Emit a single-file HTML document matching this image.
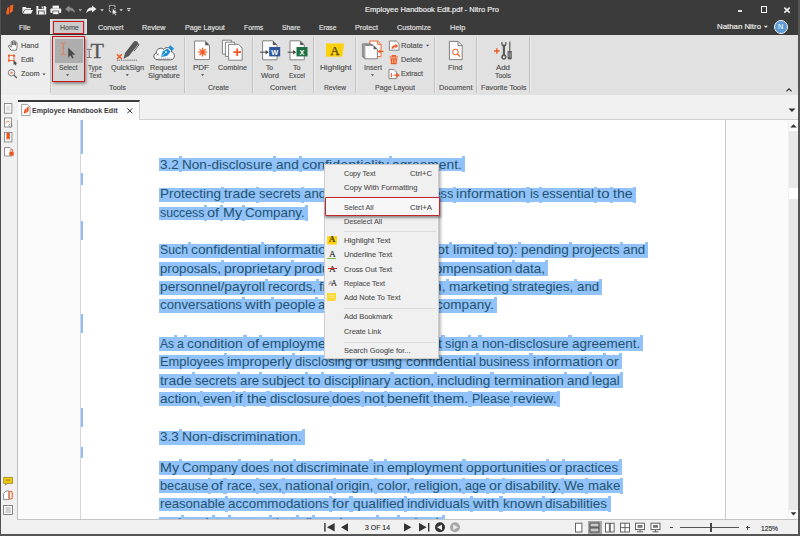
<!DOCTYPE html>
<html lang="en"><head><meta charset="utf-8"><title>Employee Handbook Edit.pdf - Nitro Pro</title>
<style>
html,body{margin:0;padding:0;}
body{width:800px;height:536px;overflow:hidden;position:relative;background:#f0f0f0;font-family:"Liberation Sans", sans-serif;}
#app{position:absolute;left:0;top:0;width:800px;height:536px;overflow:hidden;}
#app div,#app svg,#app span{position:absolute;}
.t{white-space:nowrap;line-height:1;transform-origin:0 50%;}
.u{-webkit-text-stroke:0.16px currentColor;}
.m{-webkit-text-stroke:0.1px currentColor;}
</style></head>
<body><div id="app">
<div style="left:0px;top:95px;width:800px;height:441px;background:#f0f0f0;"></div>
<div style="left:18px;top:120px;width:770px;height:399px;background:#fbfbfb;"></div>
<div style="left:80px;top:120px;width:646px;height:399px;background:#ffffff;border-left:1px solid #d4d4d4;border-right:1px solid #c9c9c9;box-sizing:border-box;"></div>
<div style="left:80.6px;top:120px;width:2.8px;height:34.4px;background:#8ec0f8;"></div>
<div style="left:80.6px;top:173px;width:2.8px;height:12px;background:#8ec0f8;"></div>
<div style="left:80.6px;top:221px;width:2.8px;height:19.3px;background:#8ec0f8;"></div>
<div style="left:80.6px;top:314px;width:2.8px;height:19px;background:#8ec0f8;"></div>
<div style="left:80.6px;top:407.6px;width:2.8px;height:19.7px;background:#8ec0f8;"></div>
<div style="left:80.6px;top:446.5px;width:2.8px;height:11.3px;background:#8ec0f8;"></div>
<div style="left:158.8px;top:157.8px;width:306.6px;height:13.7px;background:#91c2f9;"></div>
<div style="left:178.6px;top:155.9px;width:3.4px;height:16.1px;background:#91c2f9;"></div>
<div style="left:272.5px;top:155.9px;width:3.4px;height:16.1px;background:#91c2f9;"></div>
<div style="left:298.6px;top:155.9px;width:3.4px;height:16.1px;background:#91c2f9;"></div>
<div style="left:388.8px;top:155.9px;width:3.4px;height:16.1px;background:#91c2f9;"></div>
<div style="left:462.0px;top:155.9px;width:3.4px;height:16.1px;background:#91c2f9;"></div>
<div style="left:158.8px;top:188.4px;width:477.0px;height:13.7px;background:#91c2f9;"></div>
<div style="left:220.8px;top:186.5px;width:3.3px;height:16.1px;background:#91c2f9;"></div>
<div style="left:255.7px;top:186.5px;width:3.3px;height:16.1px;background:#91c2f9;"></div>
<div style="left:300.8px;top:186.5px;width:3.3px;height:16.1px;background:#91c2f9;"></div>
<div style="left:326.2px;top:186.5px;width:3.3px;height:16.1px;background:#91c2f9;"></div>
<div style="left:399.5px;top:186.5px;width:3.3px;height:16.1px;background:#91c2f9;"></div>
<div style="left:453.2px;top:186.5px;width:3.3px;height:16.1px;background:#91c2f9;"></div>
<div style="left:526.4px;top:186.5px;width:3.3px;height:16.1px;background:#91c2f9;"></div>
<div style="left:538.7px;top:186.5px;width:3.3px;height:16.1px;background:#91c2f9;"></div>
<div style="left:593.8px;top:186.5px;width:3.3px;height:16.1px;background:#91c2f9;"></div>
<div style="left:609.5px;top:186.5px;width:3.3px;height:16.1px;background:#91c2f9;"></div>
<div style="left:632.5px;top:186.5px;width:3.3px;height:16.1px;background:#91c2f9;"></div>
<div style="left:158.8px;top:206.7px;width:149.5px;height:13.7px;background:#91c2f9;"></div>
<div style="left:204.2px;top:204.8px;width:3.3px;height:16.1px;background:#91c2f9;"></div>
<div style="left:219.6px;top:204.8px;width:3.3px;height:16.1px;background:#91c2f9;"></div>
<div style="left:242.0px;top:204.8px;width:3.3px;height:16.1px;background:#91c2f9;"></div>
<div style="left:305.0px;top:204.8px;width:3.3px;height:16.1px;background:#91c2f9;"></div>
<div style="left:158.8px;top:243.9px;width:489.5px;height:13.7px;background:#91c2f9;"></div>
<div style="left:187.8px;top:242.0px;width:3.3px;height:16.1px;background:#91c2f9;"></div>
<div style="left:261.0px;top:242.0px;width:3.3px;height:16.1px;background:#91c2f9;"></div>
<div style="left:334.2px;top:242.0px;width:3.3px;height:16.1px;background:#91c2f9;"></div>
<div style="left:385.9px;top:242.0px;width:3.3px;height:16.1px;background:#91c2f9;"></div>
<div style="left:413.6px;top:242.0px;width:3.3px;height:16.1px;background:#91c2f9;"></div>
<div style="left:425.9px;top:242.0px;width:3.3px;height:16.1px;background:#91c2f9;"></div>
<div style="left:449.2px;top:242.0px;width:3.3px;height:16.1px;background:#91c2f9;"></div>
<div style="left:493.7px;top:242.0px;width:3.3px;height:16.1px;background:#91c2f9;"></div>
<div style="left:517.7px;top:242.0px;width:3.3px;height:16.1px;background:#91c2f9;"></div>
<div style="left:568.7px;top:242.0px;width:3.3px;height:16.1px;background:#91c2f9;"></div>
<div style="left:619.6px;top:242.0px;width:3.3px;height:16.1px;background:#91c2f9;"></div>
<div style="left:645.0px;top:242.0px;width:3.3px;height:16.1px;background:#91c2f9;"></div>
<div style="left:158.8px;top:262.1px;width:389.5px;height:13.7px;background:#91c2f9;"></div>
<div style="left:220.7px;top:260.2px;width:3.3px;height:16.1px;background:#91c2f9;"></div>
<div style="left:291.0px;top:260.2px;width:3.3px;height:16.1px;background:#91c2f9;"></div>
<div style="left:359.5px;top:260.2px;width:3.3px;height:16.1px;background:#91c2f9;"></div>
<div style="left:424.4px;top:260.2px;width:3.3px;height:16.1px;background:#91c2f9;"></div>
<div style="left:511.7px;top:260.2px;width:3.3px;height:16.1px;background:#91c2f9;"></div>
<div style="left:545.0px;top:260.2px;width:3.3px;height:16.1px;background:#91c2f9;"></div>
<div style="left:158.8px;top:281px;width:443.5px;height:13.7px;background:#91c2f9;"></div>
<div style="left:264.8px;top:279.1px;width:3.3px;height:16.1px;background:#91c2f9;"></div>
<div style="left:316.0px;top:279.1px;width:3.3px;height:16.1px;background:#91c2f9;"></div>
<div style="left:368.9px;top:279.1px;width:3.3px;height:16.1px;background:#91c2f9;"></div>
<div style="left:445.8px;top:279.1px;width:3.3px;height:16.1px;background:#91c2f9;"></div>
<div style="left:509.1px;top:279.1px;width:3.3px;height:16.1px;background:#91c2f9;"></div>
<div style="left:573.6px;top:279.1px;width:3.3px;height:16.1px;background:#91c2f9;"></div>
<div style="left:599.0px;top:279.1px;width:3.3px;height:16.1px;background:#91c2f9;"></div>
<div style="left:158.8px;top:299.2px;width:338.5px;height:13.7px;background:#91c2f9;"></div>
<div style="left:241.8px;top:297.3px;width:3.3px;height:16.1px;background:#91c2f9;"></div>
<div style="left:271.2px;top:297.3px;width:3.3px;height:16.1px;background:#91c2f9;"></div>
<div style="left:315.2px;top:297.3px;width:3.3px;height:16.1px;background:#91c2f9;"></div>
<div style="left:380.5px;top:297.3px;width:3.3px;height:16.1px;background:#91c2f9;"></div>
<div style="left:410.0px;top:297.3px;width:3.3px;height:16.1px;background:#91c2f9;"></div>
<div style="left:432.9px;top:297.3px;width:3.3px;height:16.1px;background:#91c2f9;"></div>
<div style="left:494.0px;top:297.3px;width:3.3px;height:16.1px;background:#91c2f9;"></div>
<div style="left:158.8px;top:337.2px;width:484.5px;height:13.7px;background:#91c2f9;"></div>
<div style="left:173.9px;top:335.3px;width:3.3px;height:16.1px;background:#91c2f9;"></div>
<div style="left:184.1px;top:335.3px;width:3.3px;height:16.1px;background:#91c2f9;"></div>
<div style="left:243.3px;top:335.3px;width:3.3px;height:16.1px;background:#91c2f9;"></div>
<div style="left:258.7px;top:335.3px;width:3.3px;height:16.1px;background:#91c2f9;"></div>
<div style="left:340.9px;top:335.3px;width:3.3px;height:16.1px;background:#91c2f9;"></div>
<div style="left:408.3px;top:335.3px;width:3.3px;height:16.1px;background:#91c2f9;"></div>
<div style="left:441.4px;top:335.3px;width:3.3px;height:16.1px;background:#91c2f9;"></div>
<div style="left:468.2px;top:335.3px;width:3.3px;height:16.1px;background:#91c2f9;"></div>
<div style="left:478.4px;top:335.3px;width:3.3px;height:16.1px;background:#91c2f9;"></div>
<div style="left:568.4px;top:335.3px;width:3.3px;height:16.1px;background:#91c2f9;"></div>
<div style="left:640.0px;top:335.3px;width:3.3px;height:16.1px;background:#91c2f9;"></div>
<div style="left:158.8px;top:355.1px;width:463.0px;height:13.7px;background:#91c2f9;"></div>
<div style="left:223.6px;top:353.2px;width:3.3px;height:16.1px;background:#91c2f9;"></div>
<div style="left:291.8px;top:353.2px;width:3.3px;height:16.1px;background:#91c2f9;"></div>
<div style="left:352.2px;top:353.2px;width:3.3px;height:16.1px;background:#91c2f9;"></div>
<div style="left:368.2px;top:353.2px;width:3.3px;height:16.1px;background:#91c2f9;"></div>
<div style="left:402.5px;top:353.2px;width:3.3px;height:16.1px;background:#91c2f9;"></div>
<div style="left:475.7px;top:353.2px;width:3.3px;height:16.1px;background:#91c2f9;"></div>
<div style="left:529.3px;top:353.2px;width:3.3px;height:16.1px;background:#91c2f9;"></div>
<div style="left:602.5px;top:353.2px;width:3.3px;height:16.1px;background:#91c2f9;"></div>
<div style="left:618.5px;top:353.2px;width:3.3px;height:16.1px;background:#91c2f9;"></div>
<div style="left:158.8px;top:374.2px;width:464.5px;height:13.7px;background:#91c2f9;"></div>
<div style="left:191.5px;top:372.3px;width:3.3px;height:16.1px;background:#91c2f9;"></div>
<div style="left:236.5px;top:372.3px;width:3.3px;height:16.1px;background:#91c2f9;"></div>
<div style="left:259.0px;top:372.3px;width:3.3px;height:16.1px;background:#91c2f9;"></div>
<div style="left:304.8px;top:372.3px;width:3.3px;height:16.1px;background:#91c2f9;"></div>
<div style="left:320.6px;top:372.3px;width:3.3px;height:16.1px;background:#91c2f9;"></div>
<div style="left:390.4px;top:372.3px;width:3.3px;height:16.1px;background:#91c2f9;"></div>
<div style="left:433.7px;top:372.3px;width:3.3px;height:16.1px;background:#91c2f9;"></div>
<div style="left:490.4px;top:372.3px;width:3.3px;height:16.1px;background:#91c2f9;"></div>
<div style="left:563.7px;top:372.3px;width:3.3px;height:16.1px;background:#91c2f9;"></div>
<div style="left:589.1px;top:372.3px;width:3.3px;height:16.1px;background:#91c2f9;"></div>
<div style="left:620.0px;top:372.3px;width:3.3px;height:16.1px;background:#91c2f9;"></div>
<div style="left:158.8px;top:392.4px;width:401.0px;height:13.7px;background:#91c2f9;"></div>
<div style="left:200.1px;top:390.5px;width:3.3px;height:16.1px;background:#91c2f9;"></div>
<div style="left:232.1px;top:390.5px;width:3.3px;height:16.1px;background:#91c2f9;"></div>
<div style="left:243.2px;top:390.5px;width:3.3px;height:16.1px;background:#91c2f9;"></div>
<div style="left:266.3px;top:390.5px;width:3.3px;height:16.1px;background:#91c2f9;"></div>
<div style="left:329.1px;top:390.5px;width:3.3px;height:16.1px;background:#91c2f9;"></div>
<div style="left:360.7px;top:390.5px;width:3.3px;height:16.1px;background:#91c2f9;"></div>
<div style="left:384.2px;top:390.5px;width:3.3px;height:16.1px;background:#91c2f9;"></div>
<div style="left:429.9px;top:390.5px;width:3.3px;height:16.1px;background:#91c2f9;"></div>
<div style="left:468.3px;top:390.5px;width:3.3px;height:16.1px;background:#91c2f9;"></div>
<div style="left:509.6px;top:390.5px;width:3.3px;height:16.1px;background:#91c2f9;"></div>
<div style="left:556.5px;top:390.5px;width:3.3px;height:16.1px;background:#91c2f9;"></div>
<div style="left:158.8px;top:430.9px;width:146.1px;height:13.7px;background:#91c2f9;"></div>
<div style="left:178.6px;top:429.0px;width:3.4px;height:16.1px;background:#91c2f9;"></div>
<div style="left:301.5px;top:429.0px;width:3.4px;height:16.1px;background:#91c2f9;"></div>
<div style="left:158.8px;top:461.2px;width:463.0px;height:13.7px;background:#91c2f9;"></div>
<div style="left:178.8px;top:459.3px;width:3.3px;height:16.1px;background:#91c2f9;"></div>
<div style="left:238.0px;top:459.3px;width:3.3px;height:16.1px;background:#91c2f9;"></div>
<div style="left:269.6px;top:459.3px;width:3.3px;height:16.1px;background:#91c2f9;"></div>
<div style="left:293.1px;top:459.3px;width:3.3px;height:16.1px;background:#91c2f9;"></div>
<div style="left:369.3px;top:459.3px;width:3.3px;height:16.1px;background:#91c2f9;"></div>
<div style="left:383.6px;top:459.3px;width:3.3px;height:16.1px;background:#91c2f9;"></div>
<div style="left:462.4px;top:459.3px;width:3.3px;height:16.1px;background:#91c2f9;"></div>
<div style="left:546.0px;top:459.3px;width:3.3px;height:16.1px;background:#91c2f9;"></div>
<div style="left:562.1px;top:459.3px;width:3.3px;height:16.1px;background:#91c2f9;"></div>
<div style="left:618.5px;top:459.3px;width:3.3px;height:16.1px;background:#91c2f9;"></div>
<div style="left:158.8px;top:479.4px;width:464.5px;height:13.7px;background:#91c2f9;"></div>
<div style="left:208.1px;top:477.5px;width:3.3px;height:16.1px;background:#91c2f9;"></div>
<div style="left:223.4px;top:477.5px;width:3.3px;height:16.1px;background:#91c2f9;"></div>
<div style="left:255.6px;top:477.5px;width:3.3px;height:16.1px;background:#91c2f9;"></div>
<div style="left:281.6px;top:477.5px;width:3.3px;height:16.1px;background:#91c2f9;"></div>
<div style="left:333.1px;top:477.5px;width:3.3px;height:16.1px;background:#91c2f9;"></div>
<div style="left:373.7px;top:477.5px;width:3.3px;height:16.1px;background:#91c2f9;"></div>
<div style="left:410.4px;top:477.5px;width:3.3px;height:16.1px;background:#91c2f9;"></div>
<div style="left:461.5px;top:477.5px;width:3.3px;height:16.1px;background:#91c2f9;"></div>
<div style="left:485.7px;top:477.5px;width:3.3px;height:16.1px;background:#91c2f9;"></div>
<div style="left:501.7px;top:477.5px;width:3.3px;height:16.1px;background:#91c2f9;"></div>
<div style="left:561.1px;top:477.5px;width:3.3px;height:16.1px;background:#91c2f9;"></div>
<div style="left:584.5px;top:477.5px;width:3.3px;height:16.1px;background:#91c2f9;"></div>
<div style="left:620.0px;top:477.5px;width:3.3px;height:16.1px;background:#91c2f9;"></div>
<div style="left:158.8px;top:497.8px;width:452.0px;height:13.7px;background:#91c2f9;"></div>
<div style="left:224.8px;top:495.9px;width:3.3px;height:16.1px;background:#91c2f9;"></div>
<div style="left:329.1px;top:495.9px;width:3.3px;height:16.1px;background:#91c2f9;"></div>
<div style="left:349.4px;top:495.9px;width:3.3px;height:16.1px;background:#91c2f9;"></div>
<div style="left:403.9px;top:495.9px;width:3.3px;height:16.1px;background:#91c2f9;"></div>
<div style="left:469.9px;top:495.9px;width:3.3px;height:16.1px;background:#91c2f9;"></div>
<div style="left:499.3px;top:495.9px;width:3.3px;height:16.1px;background:#91c2f9;"></div>
<div style="left:542.2px;top:495.9px;width:3.3px;height:16.1px;background:#91c2f9;"></div>
<div style="left:607.5px;top:495.9px;width:3.3px;height:16.1px;background:#91c2f9;"></div>
<div style="left:158.8px;top:516.7px;width:285.8px;height:13.7px;background:#91c2f9;"></div>
<div style="left:181.0px;top:514.8px;width:3.1px;height:16.1px;background:#91c2f9;"></div>
<div style="left:212.4px;top:514.8px;width:3.1px;height:16.1px;background:#91c2f9;"></div>
<div style="left:227.5px;top:514.8px;width:3.1px;height:16.1px;background:#91c2f9;"></div>
<div style="left:269.2px;top:514.8px;width:3.1px;height:16.1px;background:#91c2f9;"></div>
<div style="left:295.5px;top:514.8px;width:3.1px;height:16.1px;background:#91c2f9;"></div>
<div style="left:311.6px;top:514.8px;width:3.1px;height:16.1px;background:#91c2f9;"></div>
<div style="left:375.9px;top:514.8px;width:3.1px;height:16.1px;background:#91c2f9;"></div>
<div style="left:397.4px;top:514.8px;width:3.1px;height:16.1px;background:#91c2f9;"></div>
<div style="left:441.5px;top:514.8px;width:3.1px;height:16.1px;background:#91c2f9;"></div>
<span class="t" style="left:159.8px;top:158.03px;font-size:13.2px;color:#235370;transform:scaleX(1.0254);">3.2</span>
<span class="t" style="left:181.97px;top:158.03px;font-size:13.2px;color:#235370;transform:scaleX(1.0288);">Non-disclosure</span>
<span class="t" style="left:275.83px;top:158.03px;font-size:13.2px;color:#235370;transform:scaleX(1.0320);">and</span>
<span class="t" style="left:301.91px;top:158.03px;font-size:13.2px;color:#235370;transform:scaleX(1.0873);">confidentiality</span>
<span class="t" style="left:392.15px;top:158.03px;font-size:13.2px;color:#235370;transform:scaleX(1.0469);">agreement.</span>
<span class="t" style="left:159.8px;top:187.43px;font-size:13.2px;color:#235370;transform:scaleX(1.0268);">Protecting</span>
<span class="t" style="left:224.05px;top:187.43px;font-size:13.2px;color:#235370;transform:scaleX(1.0535);">trade</span>
<span class="t" style="left:259.0px;top:187.43px;font-size:13.2px;color:#235370;transform:scaleX(0.9827);">secrets</span>
<span class="t" style="left:304.06px;top:187.43px;font-size:13.2px;color:#235370;transform:scaleX(1.0066);">and</span>
<span class="t" style="left:329.5px;top:187.43px;font-size:13.2px;color:#235370;transform:scaleX(1.0492);">confidential</span>
<span class="t" style="left:402.78px;top:187.43px;font-size:13.2px;color:#235370;transform:scaleX(0.9675);">business</span>
<span class="t" style="left:456.43px;top:187.43px;font-size:13.2px;color:#235370;transform:scaleX(1.0728);">information</span>
<span class="t" style="left:529.7px;top:187.43px;font-size:13.2px;color:#235370;transform:scaleX(0.9432);">is</span>
<span class="t" style="left:541.97px;top:187.43px;font-size:13.2px;color:#235370;transform:scaleX(0.9952);">essential</span>
<span class="t" style="left:597.05px;top:187.43px;font-size:13.2px;color:#235370;transform:scaleX(1.1364);">to</span>
<span class="t" style="left:612.82px;top:187.43px;font-size:13.2px;color:#235370;transform:scaleX(1.0728);">the</span>
<span class="t" style="left:159.8px;top:205.83px;font-size:13.2px;color:#235370;transform:scaleX(0.9313);">success</span>
<span class="t" style="left:207.47px;top:205.83px;font-size:13.2px;color:#235370;transform:scaleX(1.1036);">of</span>
<span class="t" style="left:222.91px;top:205.83px;font-size:13.2px;color:#235370;transform:scaleX(1.0839);">My</span>
<span class="t" style="left:245.28px;top:205.83px;font-size:13.2px;color:#235370;transform:scaleX(1.0101);">Company.</span>
<span class="t" style="left:159.8px;top:243.13px;font-size:13.2px;color:#235370;transform:scaleX(0.9307);">Such</span>
<span class="t" style="left:191.05px;top:243.13px;font-size:13.2px;color:#235370;transform:scaleX(1.0483);">confidential</span>
<span class="t" style="left:264.26px;top:243.13px;font-size:13.2px;color:#235370;transform:scaleX(1.0717);">information</span>
<span class="t" style="left:337.46px;top:243.13px;font-size:13.2px;color:#235370;transform:scaleX(1.0010);">includes</span>
<span class="t" style="left:389.17px;top:243.13px;font-size:13.2px;color:#235370;transform:scaleX(1.0755);">(but</span>
<span class="t" style="left:416.89px;top:243.13px;font-size:13.2px;color:#235370;transform:scaleX(0.9432);">is</span>
<span class="t" style="left:429.15px;top:243.13px;font-size:13.2px;color:#235370;transform:scaleX(1.0947);">not</span>
<span class="t" style="left:452.51px;top:243.13px;font-size:13.2px;color:#235370;transform:scaleX(1.0806);">limited</span>
<span class="t" style="left:496.96px;top:243.13px;font-size:13.2px;color:#235370;transform:scaleX(1.0880);">to):</span>
<span class="t" style="left:520.98px;top:243.13px;font-size:13.2px;color:#235370;transform:scaleX(1.0173);">pending</span>
<span class="t" style="left:572.01px;top:243.13px;font-size:13.2px;color:#235370;transform:scaleX(1.0299);">projects</span>
<span class="t" style="left:622.86px;top:243.13px;font-size:13.2px;color:#235370;transform:scaleX(1.0056);">and</span>
<span class="t" style="left:159.8px;top:261.53px;font-size:13.2px;color:#235370;transform:scaleX(1.0007);">proposals,</span>
<span class="t" style="left:223.98px;top:261.53px;font-size:13.2px;color:#235370;transform:scaleX(1.0635);">proprietary</span>
<span class="t" style="left:294.31px;top:261.53px;font-size:13.2px;color:#235370;transform:scaleX(1.0590);">production</span>
<span class="t" style="left:362.82px;top:261.53px;font-size:13.2px;color:#235370;transform:scaleX(0.9658);">processes,</span>
<span class="t" style="left:427.7px;top:261.53px;font-size:13.2px;color:#235370;transform:scaleX(1.0229);">compensation</span>
<span class="t" style="left:514.97px;top:261.53px;font-size:13.2px;color:#235370;transform:scaleX(1.0234);">data,</span>
<span class="t" style="left:159.8px;top:279.93px;font-size:13.2px;color:#235370;transform:scaleX(1.0453);">personnel/payroll</span>
<span class="t" style="left:268.06px;top:279.93px;font-size:13.2px;color:#235370;transform:scaleX(1.0071);">records,</span>
<span class="t" style="left:319.31px;top:279.93px;font-size:13.2px;color:#235370;transform:scaleX(1.0256);">financial</span>
<span class="t" style="left:372.22px;top:279.93px;font-size:13.2px;color:#235370;transform:scaleX(1.0683);">information,</span>
<span class="t" style="left:449.1px;top:279.93px;font-size:13.2px;color:#235370;transform:scaleX(1.0356);">marketing</span>
<span class="t" style="left:512.35px;top:279.93px;font-size:13.2px;color:#235370;transform:scaleX(1.0060);">strategies,</span>
<span class="t" style="left:576.84px;top:279.93px;font-size:13.2px;color:#235370;transform:scaleX(1.0066);">and</span>
<span class="t" style="left:159.8px;top:298.33px;font-size:13.2px;color:#235370;transform:scaleX(1.0074);">conversations</span>
<span class="t" style="left:245.06px;top:298.33px;font-size:13.2px;color:#235370;transform:scaleX(1.1163);">with</span>
<span class="t" style="left:274.52px;top:298.33px;font-size:13.2px;color:#235370;transform:scaleX(1.0263);">people</span>
<span class="t" style="left:318.45px;top:298.33px;font-size:13.2px;color:#235370;transform:scaleX(0.9842);">associated</span>
<span class="t" style="left:383.78px;top:298.33px;font-size:13.2px;color:#235370;transform:scaleX(1.1163);">with</span>
<span class="t" style="left:413.24px;top:298.33px;font-size:13.2px;color:#235370;transform:scaleX(1.0734);">the</span>
<span class="t" style="left:436.21px;top:298.33px;font-size:13.2px;color:#235370;transform:scaleX(1.0282);">company.</span>
<span class="t" style="left:159.8px;top:337.03px;font-size:13.2px;color:#235370;transform:scaleX(0.9148);">As</span>
<span class="t" style="left:177.17px;top:337.03px;font-size:13.2px;color:#235370;transform:scaleX(0.9464);">a</span>
<span class="t" style="left:187.41px;top:337.03px;font-size:13.2px;color:#235370;transform:scaleX(1.0582);">condition</span>
<span class="t" style="left:246.57px;top:337.03px;font-size:13.2px;color:#235370;transform:scaleX(1.0991);">of</span>
<span class="t" style="left:261.94px;top:337.03px;font-size:13.2px;color:#235370;transform:scaleX(1.0460);">employment,</span>
<span class="t" style="left:344.19px;top:337.03px;font-size:13.2px;color:#235370;transform:scaleX(1.0058);">employees</span>
<span class="t" style="left:411.63px;top:337.03px;font-size:13.2px;color:#235370;transform:scaleX(1.0417);">must</span>
<span class="t" style="left:444.68px;top:337.03px;font-size:13.2px;color:#235370;transform:scaleX(0.9701);">sign</span>
<span class="t" style="left:471.45px;top:337.03px;font-size:13.2px;color:#235370;transform:scaleX(0.9464);">a</span>
<span class="t" style="left:481.68px;top:337.03px;font-size:13.2px;color:#235370;transform:scaleX(1.0114);">non-disclosure</span>
<span class="t" style="left:571.71px;top:337.03px;font-size:13.2px;color:#235370;transform:scaleX(1.0236);">agreement.</span>
<span class="t" style="left:159.8px;top:355.43px;font-size:13.2px;color:#235370;transform:scaleX(0.9784);">Employees</span>
<span class="t" style="left:226.91px;top:355.43px;font-size:13.2px;color:#235370;transform:scaleX(1.0545);">improperly</span>
<span class="t" style="left:295.11px;top:355.43px;font-size:13.2px;color:#235370;transform:scaleX(0.9856);">disclosing</span>
<span class="t" style="left:355.47px;top:355.43px;font-size:13.2px;color:#235370;transform:scaleX(1.0814);">or</span>
<span class="t" style="left:371.43px;top:355.43px;font-size:13.2px;color:#235370;transform:scaleX(0.9838);">using</span>
<span class="t" style="left:405.72px;top:355.43px;font-size:13.2px;color:#235370;transform:scaleX(1.0487);">confidential</span>
<span class="t" style="left:478.96px;top:355.43px;font-size:13.2px;color:#235370;transform:scaleX(0.9671);">business</span>
<span class="t" style="left:532.58px;top:355.43px;font-size:13.2px;color:#235370;transform:scaleX(1.0722);">information</span>
<span class="t" style="left:605.81px;top:355.43px;font-size:13.2px;color:#235370;transform:scaleX(1.0814);">or</span>
<span class="t" style="left:159.8px;top:373.83px;font-size:13.2px;color:#235370;transform:scaleX(1.0535);">trade</span>
<span class="t" style="left:194.74px;top:373.83px;font-size:13.2px;color:#235370;transform:scaleX(0.9829);">secrets</span>
<span class="t" style="left:239.8px;top:373.83px;font-size:13.2px;color:#235370;transform:scaleX(1.0072);">are</span>
<span class="t" style="left:262.28px;top:373.83px;font-size:13.2px;color:#235370;transform:scaleX(1.0180);">subject</span>
<span class="t" style="left:308.1px;top:373.83px;font-size:13.2px;color:#235370;transform:scaleX(1.1364);">to</span>
<span class="t" style="left:323.87px;top:373.83px;font-size:13.2px;color:#235370;transform:scaleX(1.0191);">disciplinary</span>
<span class="t" style="left:393.63px;top:373.83px;font-size:13.2px;color:#235370;transform:scaleX(1.0322);">action,</span>
<span class="t" style="left:437.02px;top:373.83px;font-size:13.2px;color:#235370;transform:scaleX(1.0251);">including</span>
<span class="t" style="left:493.67px;top:373.83px;font-size:13.2px;color:#235370;transform:scaleX(1.0726);">termination</span>
<span class="t" style="left:566.94px;top:373.83px;font-size:13.2px;color:#235370;transform:scaleX(1.0066);">and</span>
<span class="t" style="left:592.38px;top:373.83px;font-size:13.2px;color:#235370;transform:scaleX(0.9909);">legal</span>
<span class="t" style="left:159.8px;top:392.23px;font-size:13.2px;color:#235370;transform:scaleX(1.0376);">action,</span>
<span class="t" style="left:203.41px;top:392.23px;font-size:13.2px;color:#235370;transform:scaleX(1.0039);">even</span>
<span class="t" style="left:235.43px;top:392.23px;font-size:13.2px;color:#235370;transform:scaleX(1.1799);">if</span>
<span class="t" style="left:246.5px;top:392.23px;font-size:13.2px;color:#235370;transform:scaleX(1.0783);">the</span>
<span class="t" style="left:269.57px;top:392.23px;font-size:13.2px;color:#235370;transform:scaleX(1.0028);">disclosure</span>
<span class="t" style="left:332.4px;top:392.23px;font-size:13.2px;color:#235370;transform:scaleX(0.9885);">does</span>
<span class="t" style="left:363.97px;top:392.23px;font-size:13.2px;color:#235370;transform:scaleX(1.1017);">not</span>
<span class="t" style="left:387.47px;top:392.23px;font-size:13.2px;color:#235370;transform:scaleX(1.0720);">benefit</span>
<span class="t" style="left:433.22px;top:392.23px;font-size:13.2px;color:#235370;transform:scaleX(1.0638);">them.</span>
<span class="t" style="left:471.6px;top:392.23px;font-size:13.2px;color:#235370;transform:scaleX(0.9430);">Please</span>
<span class="t" style="left:512.92px;top:392.23px;font-size:13.2px;color:#235370;transform:scaleX(1.0617);">review.</span>
<span class="t" style="left:159.8px;top:429.83px;font-size:13.2px;color:#235370;transform:scaleX(1.0243);">3.3</span>
<span class="t" style="left:181.95px;top:429.83px;font-size:13.2px;color:#235370;transform:scaleX(1.0591);">Non-discrimination.</span>
<span class="t" style="left:159.8px;top:460.73px;font-size:13.2px;color:#235370;transform:scaleX(1.0816);">My</span>
<span class="t" style="left:182.12px;top:460.73px;font-size:13.2px;color:#235370;transform:scaleX(0.9904);">Company</span>
<span class="t" style="left:241.32px;top:460.73px;font-size:13.2px;color:#235370;transform:scaleX(0.9878);">does</span>
<span class="t" style="left:272.87px;top:460.73px;font-size:13.2px;color:#235370;transform:scaleX(1.1006);">not</span>
<span class="t" style="left:296.35px;top:460.73px;font-size:13.2px;color:#235370;transform:scaleX(1.0368);">discriminate</span>
<span class="t" style="left:372.59px;top:460.73px;font-size:13.2px;color:#235370;transform:scaleX(1.0696);">in</span>
<span class="t" style="left:386.86px;top:460.73px;font-size:13.2px;color:#235370;transform:scaleX(1.0509);">employment</span>
<span class="t" style="left:465.65px;top:460.73px;font-size:13.2px;color:#235370;transform:scaleX(1.0643);">opportunities</span>
<span class="t" style="left:549.31px;top:460.73px;font-size:13.2px;color:#235370;transform:scaleX(1.0866);">or</span>
<span class="t" style="left:565.35px;top:460.73px;font-size:13.2px;color:#235370;transform:scaleX(1.0070);">practices</span>
<span class="t" style="left:159.8px;top:479.03px;font-size:13.2px;color:#235370;transform:scaleX(0.9693);">because</span>
<span class="t" style="left:211.4px;top:479.03px;font-size:13.2px;color:#235370;transform:scaleX(1.0955);">of</span>
<span class="t" style="left:226.72px;top:479.03px;font-size:13.2px;color:#235370;transform:scaleX(0.9857);">race,</span>
<span class="t" style="left:258.9px;top:479.03px;font-size:13.2px;color:#235370;transform:scaleX(0.9406);">sex,</span>
<span class="t" style="left:284.92px;top:479.03px;font-size:13.2px;color:#235370;transform:scaleX(1.0432);">national</span>
<span class="t" style="left:336.39px;top:479.03px;font-size:13.2px;color:#235370;transform:scaleX(1.0398);">origin,</span>
<span class="t" style="left:377.01px;top:479.03px;font-size:13.2px;color:#235370;transform:scaleX(1.0580);">color,</span>
<span class="t" style="left:413.65px;top:479.03px;font-size:13.2px;color:#235370;transform:scaleX(1.0364);">religion,</span>
<span class="t" style="left:464.79px;top:479.03px;font-size:13.2px;color:#235370;transform:scaleX(0.9516);">age</span>
<span class="t" style="left:489.01px;top:479.03px;font-size:13.2px;color:#235370;transform:scaleX(1.0806);">or</span>
<span class="t" style="left:504.96px;top:479.03px;font-size:13.2px;color:#235370;transform:scaleX(1.0540);">disability.</span>
<span class="t" style="left:564.37px;top:479.03px;font-size:13.2px;color:#235370;transform:scaleX(1.0273);">We</span>
<span class="t" style="left:587.72px;top:479.03px;font-size:13.2px;color:#235370;transform:scaleX(1.0009);">make</span>
<span class="t" style="left:159.8px;top:497.23px;font-size:13.2px;color:#235370;transform:scaleX(0.9964);">reasonable</span>
<span class="t" style="left:228.09px;top:497.23px;font-size:13.2px;color:#235370;transform:scaleX(1.0131);">accommodations</span>
<span class="t" style="left:332.35px;top:497.23px;font-size:13.2px;color:#235370;transform:scaleX(1.1091);">for</span>
<span class="t" style="left:352.68px;top:497.23px;font-size:13.2px;color:#235370;transform:scaleX(1.0431);">qualified</span>
<span class="t" style="left:407.19px;top:497.23px;font-size:13.2px;color:#235370;transform:scaleX(1.0183);">individuals</span>
<span class="t" style="left:473.18px;top:497.23px;font-size:13.2px;color:#235370;transform:scaleX(1.1120);">with</span>
<span class="t" style="left:502.52px;top:497.23px;font-size:13.2px;color:#235370;transform:scaleX(1.0413);">known</span>
<span class="t" style="left:545.49px;top:497.23px;font-size:13.2px;color:#235370;transform:scaleX(1.0192);">disabilities</span>
<span class="t" style="left:159.8px;top:515.63px;font-size:13.2px;color:#235370;transform:scaleX(0.9620);">and</span>
<span class="t" style="left:184.11px;top:515.63px;font-size:13.2px;color:#235370;transform:scaleX(1.0171);">work</span>
<span class="t" style="left:215.56px;top:515.63px;font-size:13.2px;color:#235370;transform:scaleX(1.0845);">to</span>
<span class="t" style="left:230.62px;top:515.63px;font-size:13.2px;color:#235370;transform:scaleX(0.9564);">ensure</span>
<span class="t" style="left:272.32px;top:515.63px;font-size:13.2px;color:#235370;transform:scaleX(1.0536);">that</span>
<span class="t" style="left:298.63px;top:515.63px;font-size:13.2px;color:#235370;transform:scaleX(0.9831);">all</span>
<span class="t" style="left:314.74px;top:515.63px;font-size:13.2px;color:#235370;transform:scaleX(0.9589);">employees</span>
<span class="t" style="left:379.03px;top:515.63px;font-size:13.2px;color:#235370;transform:scaleX(0.9626);">are</span>
<span class="t" style="left:400.51px;top:515.63px;font-size:13.2px;color:#235370;transform:scaleX(0.9638);">valued.</span>
<div style="left:788.7px;top:120px;width:9.3px;height:399px;background:#e8e8e8;"></div>
<div style="left:788.7px;top:120px;width:9.3px;height:11px;background:#fdfdfd;"></div>
<div style="left:788.7px;top:509.5px;width:9.3px;height:10px;background:#fdfdfd;"></div>
<div style="left:788.7px;top:188px;width:9.3px;height:11px;background:#ffffff;"></div>
<svg style="left:789px;top:122px" width="9" height="8" viewBox="0 0 9 8"><path d="M1.2 5.6 L4.5 2.2 L7.8 5.6Z" fill="#333"/></svg>
<svg style="left:789.3px;top:510.2px" width="9" height="8" viewBox="0 0 9 8"><path d="M1.6 2.2 L4.5 5.4 L7.4 2.2Z" fill="#333"/></svg>
<div style="left:0px;top:519px;width:800px;height:17px;background:#f0f0f0;"></div>
<div style="left:17px;top:519px;width:783px;height:1px;background:#c4c4c4;"></div>
<div style="left:16.9px;top:101px;width:1px;height:418px;background:#bdbdbd;"></div>
<svg style="left:322px;top:521px" width="140" height="13" viewBox="0 0 140 13"><rect x="2.2" y="2" width="1.4" height="8.6" fill="#333"/><path d="M12.6 2 L12.6 10.6 L5 6.3Z" fill="#333"/><path d="M26 2.2 L26 10.4 L19 6.3Z" fill="#333"/><path d="M82 2.2 L82 10.4 L89.4 6.3Z" fill="#333"/><path d="M97 2 L97 10.6 L104.6 6.3Z" fill="#333"/><rect x="106" y="2" width="1.4" height="8.6" fill="#333"/><circle cx="118" cy="6.3" r="5" fill="#333"/><path d="M120 3.4 L120 9.2 L115 6.3Z" fill="#f0f0f0"/><circle cx="133" cy="6.3" r="5" fill="#a8a8a8"/><path d="M131.2 3.6 L131.2 9 L136 6.3Z" fill="#ececec"/></svg>
<div style="left:587.5px;top:521px;width:14px;height:13px;background:#a6a6a6;"></div>
<svg style="left:573px;top:521px" width="92" height="13" viewBox="0 0 92 13" fill="none" stroke="#555" stroke-width="0.9"><rect x="2.5" y="2.2" width="6.4" height="8.8" fill="#fff"/><rect x="17" y="2" width="9" height="4" fill="#c8c8c8" stroke="#444"/><rect x="17" y="7" width="9" height="4" fill="#c8c8c8" stroke="#444"/><rect x="32.5" y="2.2" width="3.8" height="8.8" fill="#fff"/><rect x="37.3" y="2.2" width="3.8" height="8.8" fill="#fff"/><rect x="47.5" y="2.2" width="9" height="8.8" fill="#fff"/><path d="M52 2.2V11M47.5 6.6H56.5"/><rect x="62.5" y="2.2" width="9" height="6.4" fill="#fff"/><rect x="64.5" y="4" width="5" height="2.8" fill="#777" stroke="none"/><path d="M64 10.8H70M67 8.6V10.8"/><rect x="78" y="2.2" width="9" height="6.4" fill="#fff"/><rect x="80" y="4" width="5" height="2.8" fill="#777" stroke="none"/><path d="M79.5 10.8H85.5M82.5 8.6V10.8"/></svg>
<div style="left:669.5px;top:527px;width:3px;height:1px;background:#444;"></div>
<div style="left:679.5px;top:527px;width:59px;height:1px;background:#555;"></div>
<div style="left:709.5px;top:523px;width:2.2px;height:9px;background:#444;"></div>
<div style="left:745.5px;top:527px;width:4px;height:1px;background:#444;"></div>
<div style="left:747px;top:525.5px;width:1px;height:4px;background:#444;"></div>
<span class="t u" style="left:364.5px;top:524.34px;font-size:7.4px;color:#333;transform:scaleX(0.9362);">3 OF 14</span>
<span class="t u" style="left:760.8px;top:524.57px;font-size:7.6px;color:#333;transform:scaleX(0.8746);">125%</span>
<div style="left:0px;top:95px;width:800px;height:24.5px;background:#f1f1f1;"></div>
<div style="left:18px;top:119px;width:782px;height:1px;background:#cfcfcf;"></div>
<div style="left:18px;top:100px;width:122px;height:19.6px;background:#fbfbfb;border-top:2px solid #3b3b3b;border-right:1px solid #d0d0d0;box-sizing:border-box;"></div>
<svg style="left:0;top:95px" width="18" height="430" viewBox="0 0 18 430"><rect x="4.5" y="8.6" width="7.4" height="9.6" fill="#fafafa" stroke="#777" stroke-width="0.8"/><rect x="6.2" y="10.6" width="4" height="5.6" fill="#e2e2e2"/><rect x="4.5" y="23" width="7" height="9" fill="#fff" stroke="#777" stroke-width="0.8"/><path d="M5.5 28 q2 -3 4 -1" stroke="#e8622a" fill="none" stroke-width="0.9"/><circle cx="10.5" cy="30.5" r="1.6" fill="none" stroke="#777" stroke-width="0.7"/><rect x="4.5" y="37.5" width="7.4" height="9.4" fill="#fff" stroke="#777" stroke-width="0.8"/><path d="M6.5 38 V45 L8.2 43.6 L9.9 45 V38Z" fill="#e8551f"/><path d="M4.5 52.5 H10 L12 54.5 V61 H4.5Z" fill="#fff" stroke="#777" stroke-width="0.8"/><rect x="9.3" y="57" width="4.4" height="3.6" fill="#e8551f"/><path d="M10.2 57 v-1.2 a1.3 1.3 0 0 1 2.6 0 v1.2" fill="none" stroke="#e8551f" stroke-width="0.8"/><path d="M3.6 382.4 H12.6 V388.4 H7 L5.6 390.2 V388.4 H3.6Z" fill="#f2c811" stroke="#8a7a20" stroke-width="0.7"/><rect x="5.6" y="384.2" width="5" height="2" fill="#c9a60a"/><path d="M3.6 398.5 L6 396 H9 V404.6 H3.6Z" fill="#fff" stroke="#777" stroke-width="0.8"/><rect x="9" y="396.2" width="3.2" height="8" rx="1.6" fill="none" stroke="#e8622a" stroke-width="1.1"/><rect x="3.6" y="410.4" width="8.8" height="9" fill="#fff" stroke="#666" stroke-width="0.8"/><path d="M5.4 413H10.8M5.4 415H10.8M5.4 417H10.8" stroke="#888" stroke-width="0.8"/></svg>
<svg style="left:20px;top:103px" width="12" height="14" viewBox="0 0 12 14"><path d="M1.6 1.4 H7.4 L10 4 V12.6 H1.6Z" fill="#fff" stroke="#888" stroke-width="0.8"/><path d="M3.6 10.8 L4.6 6.6 L6.2 5.4 L6 9.8 Z" fill="#ee4f1c"/><path d="M6.3 10 L6.6 4.6 L8.8 3.8 L8.4 8.4 Z" fill="#ee4f1c"/></svg>
<svg style="left:126px;top:106.5px" width="8" height="8" viewBox="0 0 8 8"><path d="M1.3 1.3 L6.3 6.3 M6.3 1.3 L1.3 6.3" stroke="#333" stroke-width="1"/></svg>
<svg style="left:787px;top:107px" width="10" height="7" viewBox="0 0 10 7"><path d="M1.6 1.4 L5 5 L8.4 1.4Z" fill="#333"/></svg>
<span class="t" style="left:32px;top:107.27px;font-size:7.6px;color:#3c3c3c;transform:scaleX(0.9338);font-weight:bold;">Employee Handbook Edit</span>
<div style="left:0px;top:34.3px;width:800px;height:60.4px;background:#e1e1e1;"></div>
<div style="left:1px;top:34.3px;width:49px;height:60.4px;background:#ededed;"></div>
<div style="left:50px;top:36.8px;width:1px;height:56px;background:#c4c4c4;"></div>
<div style="left:51px;top:36.8px;width:1px;height:56px;background:#e9e9e9;"></div>
<div style="left:184.3px;top:36.8px;width:1px;height:56px;background:#c4c4c4;"></div>
<div style="left:185.3px;top:36.8px;width:1px;height:56px;background:#e9e9e9;"></div>
<div style="left:252px;top:36.8px;width:1px;height:56px;background:#c4c4c4;"></div>
<div style="left:253px;top:36.8px;width:1px;height:56px;background:#e9e9e9;"></div>
<div style="left:313.4px;top:36.8px;width:1px;height:56px;background:#c4c4c4;"></div>
<div style="left:314.4px;top:36.8px;width:1px;height:56px;background:#e9e9e9;"></div>
<div style="left:355px;top:36.8px;width:1px;height:56px;background:#c4c4c4;"></div>
<div style="left:356px;top:36.8px;width:1px;height:56px;background:#e9e9e9;"></div>
<div style="left:434px;top:36.8px;width:1px;height:56px;background:#c4c4c4;"></div>
<div style="left:435px;top:36.8px;width:1px;height:56px;background:#e9e9e9;"></div>
<div style="left:476px;top:36.8px;width:1px;height:56px;background:#c4c4c4;"></div>
<div style="left:477px;top:36.8px;width:1px;height:56px;background:#e9e9e9;"></div>
<div style="left:528.6px;top:36.8px;width:1px;height:56px;background:#c4c4c4;"></div>
<div style="left:529.6px;top:36.8px;width:1px;height:56px;background:#e9e9e9;"></div>
<div style="left:0px;top:0px;width:800px;height:34.7px;background:#3b3b3b;"></div>
<div style="left:50px;top:19.3px;width:37px;height:15.2px;background:#e1e1e1;"></div>
<div style="left:53.1px;top:21.1px;width:30.8px;height:12.6px;background:#cbcbcb;border:1.4px solid #cc1a20;box-sizing:border-box;box-shadow:0 0 2px rgba(0,0,0,.4);"></div>
<div style="left:52.1px;top:36.3px;width:33.2px;height:46px;background:#d6d6d6;border:1.4px solid #c8161c;box-sizing:border-box;box-shadow:1px 1.5px 3px rgba(0,0,0,.45);"></div>
<div style="left:54.8px;top:38.6px;width:27.9px;height:24px;background:#adadad;"></div>
<svg style="left:0;top:0" width="140" height="19" viewBox="0 0 140 19"><path d="M6 14 L7.2 8 L9.5 6.5 L9.3 13.2 L8.2 14.8 Z" fill="#f4631e"/><path d="M9.9 13.3 L10.2 5.6 L13.4 4.5 L12.8 11.5 Z" fill="#f4631e"/><path d="M22.4 13.6 V7 H25.6 L26.6 8 H31 V9.4 H24.6 L22.4 13.6 Z" fill="#f2f2f2"/><path d="M23 13.8 L25 9.9 H33 L31 13.8 Z" fill="#f2f2f2"/><path d="M36.4 6 H45 L46.2 7.2 V14.4 H36.4Z" fill="#f2f2f2"/><rect x="38.4" y="6" width="5.2" height="3" fill="#3b3b3b"/><rect x="41.6" y="6.5" width="1.2" height="2" fill="#f2f2f2"/><rect x="38" y="10.6" width="6.6" height="3.8" fill="#3b3b3b"/><rect x="38.8" y="11.4" width="5" height="3" fill="#f2f2f2"/><rect x="52.6" y="5.6" width="6.4" height="3" fill="#f2f2f2"/><rect x="50.4" y="8.4" width="10.8" height="4.6" rx="0.8" fill="#f2f2f2"/><rect x="52.8" y="11" width="6" height="3.6" fill="#f2f2f2" stroke="#3b3b3b" stroke-width="0.7"/><path d="M65 9 L69.4 5.4 V7.6 C72.6 7.6 74.8 9.6 75 13.2 C73.6 11.2 72 10.4 69.4 10.6 V12.6 Z" fill="#8a8a8a"/><path d="M78.4 9.2 H82 L80.2 11.2Z" fill="#bdbdbd"/><path d="M96.4 9 L92 5.4 V7.6 C88.8 7.6 86.6 9.6 86.4 13.2 C87.8 11.2 89.4 10.4 92 10.6 V12.6 Z" fill="#f2f2f2"/><path d="M100.2 9.2 H103.8 L102 11.2Z" fill="#e0e0e0"/><rect x="109.4" y="5.4" width="5.6" height="6.4" fill="none" stroke="#f2f2f2" stroke-width="0.9" stroke-dasharray="1.2 0.8"/><path d="M112.6 8.4 L112.6 14.8 L114.2 13.4 L115.4 15.6 L116.4 15 L115.3 13 L117.2 12.8 Z" fill="#f2f2f2" stroke="#3b3b3b" stroke-width="0.4"/><path d="M119.4 9.2 H123 L121.2 11.2Z" fill="#e0e0e0"/><rect x="127" y="8" width="3.6" height="0.9" fill="#e0e0e0"/><path d="M127 9.8 H130.6 L128.8 11.6Z" fill="#e0e0e0"/></svg>
<div style="left:738.2px;top:10.3px;width:4.3px;height:1.6px;background:#e4e4e4;"></div>
<div style="left:761px;top:6.2px;width:6.4px;height:6.4px;background:transparent;border:1px solid #f2f2f2;border-top-width:1.8px;box-sizing:border-box;"></div>
<svg style="left:783px;top:5.5px" width="8" height="8" viewBox="0 0 8 8"><path d="M1.3 1.6 L6.7 6.6 M6.7 1.6 L1.3 6.6" stroke="#f2f2f2" stroke-width="1.5"/></svg>
<svg style="left:763px;top:24.5px" width="6" height="4" viewBox="0 0 6 4"><path d="M0.8 0.8 H5 L2.9 3Z" fill="#ddd"/></svg>
<div style="left:773.8px;top:19.8px;width:14.2px;height:14.2px;background:#5b9bd5;border:1.2px solid #f4f4f4;border-radius:50%;box-sizing:border-box;"></div>
<svg style="left:785px;top:87px" width="8" height="6" viewBox="0 0 8 6"><path d="M1.4 4.4 L4 1.8 L6.6 4.4" stroke="#333" stroke-width="1.2" fill="none"/></svg>
<svg style="left:0;top:35px" width="540" height="60" viewBox="0 35 540 60"><path d="M11 50.2 C10 48.6 9 47.2 8.4 46.2 C8.1 45.3 9.2 44.9 9.9 45.7 L11.2 47.2 V42.2 C11.2 41.3 12.6 41.3 12.6 42.2 V45 V41.2 C12.6 40.3 14.1 40.3 14.1 41.2 V45 V41.6 C14.1 40.7 15.6 40.7 15.6 41.6 V45.4 V43 C15.6 42.1 17.1 42.1 17.1 43 V47 C17.1 48.4 16.6 49.4 16.2 50.2 Z" fill="#f8f8f8" stroke="#5a5a5a" stroke-width="0.75" stroke-linejoin="round"/><rect x="9" y="55.6" width="5" height="5" fill="#fafafa" stroke="#f05a22" stroke-width="0.9"/><g fill="#f05a22"><rect x="8" y="54.6" width="2" height="2"/><rect x="13" y="54.6" width="2" height="2"/><rect x="8" y="59.6" width="2" height="2"/></g><path d="M13.6 60.2 V65 L14.8 64 L15.6 65.6 L16.5 65.2 L15.7 63.6 L17.4 63.4 Z" fill="#444"/><circle cx="11.6" cy="72.7" r="3.2" fill="#fafafa" stroke="#5a5a5a" stroke-width="0.8"/><path d="M13.9 75.1 L16.8 78" stroke="#5a5a5a" stroke-width="1.3"/><circle cx="11.6" cy="72.7" r="1.3" fill="#f58a5c"/><path d="M42.4 73.4 H45.6 L44 75.2Z" fill="#444"/><path d="M60.8 42.8 Q62.6 42.8 63.3 43.8 Q64 42.8 65.8 42.8 M63.3 43.6 V54 M60.8 54.8 Q62.6 54.8 63.3 53.8 Q64 54.8 65.8 54.8" stroke="#f0734a" stroke-width="0.9" fill="none"/><path d="M68.2 47.4 V57.6 L70.6 55.4 L72.2 58.6 L73.6 57.9 L72.1 54.8 L75.2 54.6 Z" fill="#4a4a4a"/><path d="M66 74.2 H69.2 L67.6 76Z" fill="#444"/><path d="M86.8 49.4 H91.6 M89.2 49.4 V57.4 M86.8 57.5 H91.6" stroke="#6a6a6a" stroke-width="0.9" fill="none"/><text x="90.5" y="57.9" font-family="Liberation Serif, serif" font-size="22" fill="#5a5a5a" stroke="#5a5a5a" stroke-width="0.35">T</text><g transform="translate(123.6,58.7) rotate(-51.7)"><path d="M0 0 L5.4 -2.5 H19.2 Q21.8 -2.5 21.8 0 Q21.8 2.5 19.2 2.5 H5.4 Z" fill="#565656"/><path d="M12.5 3.5 H20.6 V1.4" stroke="#565656" fill="none" stroke-width="0.9"/></g><path d="M117 54.3 L121.8 59 M121.8 54.3 L117 59" stroke="#f05a22" stroke-width="1.5"/><path d="M116.8 60.2 H137.2" stroke="#555" stroke-width="0.8" stroke-dasharray="1.4 0.7"/><path d="M125.6 74.2 H128.8 L127.2 76Z" fill="#444"/><path d="M158 59.8 C153 59.8 152.6 54 156.4 53.2 C156 49 161 46.6 163.8 49.4 C166 46 172 47.6 171.6 52 C175.4 52.4 175.4 59.8 170.6 59.8 Z" fill="#fdfdfd" stroke="#4a4a4a" stroke-width="0.9"/><path d="M158.6 58.2 H171.6" stroke="#7a8a96" stroke-width="0.7" stroke-dasharray="1.2 0.8"/><path d="M156.8 53.6 L158.6 55.4 M158.6 53.6 L156.8 55.4" stroke="#333" stroke-width="0.6"/><path d="M161 56.9 L162.6 51.6 L167.4 48.4 L170.6 51.8 L167 56 Z" fill="#1e8fd6"/><path d="M168.3 47.5 L170.5 45.2 L174 48.8 L171.7 51.1Z" fill="#1e8fd6"/><path d="M161.4 56.5 L165.6 52.4" stroke="#fff" stroke-width="0.6"/><circle cx="166" cy="52" r="0.9" fill="#fff"/><path d="M194.6 41 H205.2 L209.5 45.3 V59.6 H194.6Z" fill="#fcfcfc" stroke="#6a6a6a" stroke-width="0.8"/><path d="M205.2 41 V45.3 H209.5 Z" fill="#5a5a5a"/><g stroke="#f05a22" stroke-width="1.3"><path d="M202.6 47.8 V56.6 M198.2 52.2 H207 M199.5 49.1 L205.7 55.3 M205.7 49.1 L199.5 55.3"/></g><path d="M201 74.2 H204.2 L202.6 76Z" fill="#444"/><g fill="#fcfcfc" stroke="#6a6a6a" stroke-width="0.8"><path d="M222.4 40.2 H231.4 V54 H222.4Z"/><path d="M225.4 42.2 H234.6 V56.4 H225.4Z"/><path d="M228.6 44.4 H238.6 L242.2 48 V60.2 H228.6Z"/></g><path d="M237.2 48.4 V56 M233.4 52.2 H241" stroke="#f05a22" stroke-width="1.7"/><path d="M262.6 40.8 H272.8 L277 45 V59.8 H262.6Z" fill="#fcfcfc" stroke="#6a6a6a" stroke-width="0.8"/><path d="M272.8 40.8 V45 H277 Z" fill="#5a5a5a"/><rect x="269.2" y="47" width="11" height="9.4" fill="#2b579a"/><path d="M260 52.2 H266" stroke="#4a4a4a" stroke-width="1"/><path d="M265.6 50 L268.9 52.2 L265.6 54.4Z" fill="#4a4a4a"/><text x="271.2" y="54.6" font-family="Liberation Sans, sans-serif" font-weight="bold" font-size="7.4" fill="#fff">W</text><path d="M290 40.8 H300.1 L304.3 45 V59.8 H290Z" fill="#fcfcfc" stroke="#6a6a6a" stroke-width="0.8"/><path d="M300.1 40.8 V45 H304.3 Z" fill="#5a5a5a"/><rect x="296.5" y="47" width="11" height="9.4" fill="#1e7145"/><path d="M287.6 52.2 H293.4" stroke="#4a4a4a" stroke-width="1"/><path d="M293 50 L296.3 52.2 L293 54.4Z" fill="#4a4a4a"/><text x="299.5" y="54.5" font-family="Liberation Sans, sans-serif" font-weight="bold" font-size="7.4" fill="#fff">X</text><path d="M326 43.4 H344 L342.2 56.8 H326Z" fill="#fdd20a"/><text x="330.2" y="54.7" font-family="Liberation Serif, serif" font-size="12.8" fill="#4a3a10" stroke="#4a3a10" stroke-width="0.25">A</text><path d="M369.8 41 H377.6 L381 44.4 V56.6 H369.8Z" fill="#fff" stroke="#f05a22" stroke-width="0.9"/><path d="M377.6 41 V44.4 H381" fill="none" stroke="#f05a22" stroke-width="0.9"/><g fill="#fcfcfc" stroke="#6a6a6a" stroke-width="0.8"><path d="M362.4 43.8 H371 V56.6 H362.4Z"/><path d="M363.6 44.6 H372.6 V57.8 H363.6Z"/><path d="M364.8 45.4 H373.6 L377.4 49.2 V58.8 H364.8Z"/></g><path d="M373.6 45.4 V49.2 H377.4 Z" fill="#5a5a5a"/><path d="M383.6 51.4 H379.6" stroke="#f05a22" stroke-width="1.2"/><path d="M380.4 49.2 L377.6 51.4 L380.4 53.6Z" fill="#f05a22"/><path d="M370.8 74.2 H374 L372.4 76Z" fill="#444"/><path d="M389.4 41 H396.2 L399 43.8 V50.2 H389.4Z" fill="#fcfcfc" stroke="#6a6a6a" stroke-width="0.8"/><path d="M391.6 48.8 C391.6 46 393.4 45.2 395.4 45.2 V43.6 L398 46 L395.4 48.4 V46.9 C394.2 46.9 393.4 47.3 393.4 48.8Z" fill="#f05a22"/><path d="M389.6 57 H398 M392.2 56.8 V55.6 H395.4 V56.8" stroke="#f05a22" stroke-width="1.1" fill="none"/><path d="M390.4 58.2 H397.2 L396.6 64.2 H391Z" fill="#f05a22"/><path d="M392.6 59.4 V63 M395 59.4 V63" stroke="#f4d9cc" stroke-width="0.8"/><path d="M389 69.4 H393.8 L396.4 72 V78.6 H389Z" fill="#fcfcfc" stroke="#6a6a6a" stroke-width="0.8"/><path d="M393.6 75.2 H397.6" stroke="#f05a22" stroke-width="1.1"/><path d="M397 73 L399.8 75.2 L397 77.4Z" fill="#f05a22"/><path d="M391.4 73V77" stroke="#f05a22" stroke-width="1"/><path d="M426 44.8 H429.2 L427.6 46.6Z" fill="#444"/><path d="M449.4 41.4 H458 L462.2 45.6 V59.6 H449.4Z" fill="#fcfcfc" stroke="#666" stroke-width="0.8"/><path d="M458 41.4 V45.6 H462.2" fill="none" stroke="#666" stroke-width="0.8"/><circle cx="455.4" cy="52" r="2.8" fill="none" stroke="#f05a22" stroke-width="1"/><path d="M457.4 54 L460 56.6" stroke="#f05a22" stroke-width="1.2"/><path d="M494 51 H499.6 M496.8 48.2 V53.8" stroke="#f05a22" stroke-width="1.4"/><path d="M501.4 42 C501 44.4 501.6 45.8 502.8 46.6 V54.6 C500.4 55.6 500.6 59.8 503.9 59.8 C507.2 59.8 507.4 55.6 505 54.6 V46.6 C506.2 45.8 506.8 44.4 506.4 42 L505.2 42 V44.6 H502.6 V42 Z" fill="#5a5a5a"/><circle cx="503.9" cy="57.2" r="1.1" fill="#e1e1e1"/><rect x="509.2" y="41.6" width="1.2" height="9.6" fill="#5a5a5a"/><path d="M507.6 51 H511.8 V58.2 C511.8 59.9 507.6 59.9 507.6 58.2Z" fill="#5a5a5a"/><path d="M509 52.4V57.4M510.6 52.4V57.4" stroke="#cfcfcf" stroke-width="0.5"/></svg>
<span class="t u" style="left:19px;top:24.27px;font-size:7.6px;color:#e4e4e4;transform:scaleX(0.9388);">File</span>
<span class="t u" style="left:59.7px;top:24.27px;font-size:7.6px;color:#505050;transform:scaleX(0.9277);">Home</span>
<span class="t u" style="left:97.5px;top:24.27px;font-size:7.6px;color:#e4e4e4;transform:scaleX(0.9589);">Convert</span>
<span class="t u" style="left:142px;top:24.27px;font-size:7.6px;color:#e4e4e4;transform:scaleX(0.9435);">Review</span>
<span class="t u" style="left:184.5px;top:24.27px;font-size:7.6px;color:#e4e4e4;transform:scaleX(0.9330);">Page Layout</span>
<span class="t u" style="left:243.8px;top:24.27px;font-size:7.6px;color:#e4e4e4;transform:scaleX(0.8924);">Forms</span>
<span class="t u" style="left:281.8px;top:24.27px;font-size:7.6px;color:#e4e4e4;transform:scaleX(0.8981);">Share</span>
<span class="t u" style="left:318.8px;top:24.27px;font-size:7.6px;color:#e4e4e4;transform:scaleX(0.8769);">Erase</span>
<span class="t u" style="left:354.6px;top:24.27px;font-size:7.6px;color:#e4e4e4;transform:scaleX(0.9558);">Protect</span>
<span class="t u" style="left:396.7px;top:24.27px;font-size:7.6px;color:#e4e4e4;transform:scaleX(0.9477);">Customize</span>
<span class="t u" style="left:449.6px;top:24.27px;font-size:7.6px;color:#e4e4e4;transform:scaleX(0.9856);">Help</span>
<span class="t u" style="left:365.4px;top:6.37px;font-size:7.6px;color:#f0f0f0;transform:scaleX(0.9913);">Employee Handbook Edit.pdf - Nitro Pro</span>
<span class="t u" style="left:717px;top:22.81px;font-size:7.9px;color:#f0f0f0;transform:scaleX(0.9933);">Nathan Nitro</span>
<span class="t" style="left:778.2px;top:23.20px;font-size:7.8px;color:#fff;transform:scaleX(0.9396);">N</span>
<span class="t u" style="left:20.5px;top:41.77px;font-size:7.6px;color:#505050;transform:scaleX(0.9639);">Hand</span>
<span class="t u" style="left:20.5px;top:56.17px;font-size:7.6px;color:#505050;transform:scaleX(0.9547);">Edit</span>
<span class="t u" style="left:20.5px;top:70.37px;font-size:7.6px;color:#505050;transform:scaleX(0.9525);">Zoom</span>
<span class="t u" style="left:59px;top:63.77px;font-size:7.6px;color:#505050;transform:scaleX(0.8764);">Select</span>
<span class="t u" style="left:88px;top:63.77px;font-size:7.6px;color:#505050;transform:scaleX(0.8501);">Type</span>
<span class="t u" style="left:88.8px;top:72.17px;font-size:7.6px;color:#505050;transform:scaleX(0.8897);">Text</span>
<span class="t u" style="left:111px;top:63.77px;font-size:7.6px;color:#505050;transform:scaleX(0.9531);">QuickSign</span>
<span class="t u" style="left:150px;top:63.77px;font-size:7.6px;color:#505050;transform:scaleX(0.9542);">Request</span>
<span class="t u" style="left:147.5px;top:72.17px;font-size:7.6px;color:#505050;transform:scaleX(0.9841);">Signature</span>
<span class="t u" style="left:109px;top:83.77px;font-size:7.6px;color:#505050;transform:scaleX(0.9586);">Tools</span>
<span class="t u" style="left:193px;top:63.77px;font-size:7.6px;color:#505050;transform:scaleX(1.0535);">PDF</span>
<span class="t u" style="left:218px;top:63.77px;font-size:7.6px;color:#505050;transform:scaleX(0.9542);">Combine</span>
<span class="t u" style="left:208px;top:83.77px;font-size:7.6px;color:#505050;transform:scaleX(0.9212);">Create</span>
<span class="t u" style="left:266px;top:63.77px;font-size:7.6px;color:#505050;transform:scaleX(0.8716);">To</span>
<span class="t u" style="left:261px;top:72.17px;font-size:7.6px;color:#505050;transform:scaleX(0.9991);">Word</span>
<span class="t u" style="left:293px;top:63.77px;font-size:7.6px;color:#505050;transform:scaleX(0.9339);">To</span>
<span class="t u" style="left:289px;top:72.17px;font-size:7.6px;color:#505050;transform:scaleX(0.8612);">Excel</span>
<span class="t u" style="left:270px;top:83.77px;font-size:7.6px;color:#505050;transform:scaleX(0.9777);">Convert</span>
<span class="t u" style="left:319.5px;top:63.77px;font-size:7.6px;color:#505050;transform:scaleX(1.0655);">Highlight</span>
<span class="t u" style="left:324px;top:83.77px;font-size:7.6px;color:#505050;transform:scaleX(0.8833);">Review</span>
<span class="t u" style="left:364px;top:63.77px;font-size:7.6px;color:#505050;transform:scaleX(0.9474);">Insert</span>
<span class="t u" style="left:401px;top:41.77px;font-size:7.6px;color:#505050;transform:scaleX(0.9832);">Rotate</span>
<span class="t u" style="left:401px;top:56.17px;font-size:7.6px;color:#505050;transform:scaleX(0.9566);">Delete</span>
<span class="t u" style="left:401px;top:70.37px;font-size:7.6px;color:#505050;transform:scaleX(0.9306);">Extract</span>
<span class="t u" style="left:375px;top:83.77px;font-size:7.6px;color:#505050;transform:scaleX(0.9377);">Page Layout</span>
<span class="t u" style="left:448px;top:63.77px;font-size:7.6px;color:#505050;transform:scaleX(0.9810);">Find</span>
<span class="t u" style="left:439px;top:83.77px;font-size:7.6px;color:#505050;transform:scaleX(0.9675);">Document</span>
<span class="t u" style="left:496px;top:63.77px;font-size:7.6px;color:#505050;transform:scaleX(1.0358);">Add</span>
<span class="t u" style="left:495px;top:72.17px;font-size:7.6px;color:#505050;transform:scaleX(0.9022);">Tools</span>
<span class="t u" style="left:480.5px;top:83.77px;font-size:7.6px;color:#505050;transform:scaleX(0.9652);">Favorite Tools</span>
<div style="left:324.3px;top:164px;width:115.2px;height:195px;background:#f0f0f0;border:1px solid #cdcdcd;box-sizing:border-box;box-shadow:1.5px 1.5px 3px rgba(0,0,0,.35);"></div>
<div style="left:344px;top:231px;width:92px;height:1px;background:#dcdcdc;"></div>
<div style="left:344px;top:307.5px;width:92px;height:1px;background:#dcdcdc;"></div>
<div style="left:344px;top:341.6px;width:92px;height:1px;background:#dcdcdc;"></div>
<div style="left:325.4px;top:196.7px;width:115px;height:19.4px;background:#f7f7f7;border:1.3px solid #c1272d;box-sizing:border-box;box-shadow:0.5px 1.5px 2.5px rgba(0,0,0,.4);border-radius:1px;"></div>
<svg style="left:326px;top:233px" width="14" height="72" viewBox="0 0 14 72"><path d="M1.2 3.2 H11.2 L10.8 11.4 H1.2Z" fill="#fdd20a"/></svg>
<div style="left:327.2px;top:293px;width:8.6px;height:7.8px;background:#fdd835;border-radius:0 0 2px 0;"></div>
<div style="left:328.6px;top:295px;width:5.8px;height:0.8px;background:#fde98a;"></div>
<div style="left:328.6px;top:297px;width:5.8px;height:0.8px;background:#fde98a;"></div>
<span class="t m" style="left:344px;top:169.75px;font-size:7.5px;color:#4e4e4e;transform:scaleX(0.9483);">Copy Text</span>
<span class="t m" style="left:344px;top:183.75px;font-size:7.5px;color:#4e4e4e;transform:scaleX(1.0134);">Copy With Formatting</span>
<span class="t m" style="left:344px;top:203.55px;font-size:7.5px;color:#4e4e4e;transform:scaleX(0.9559);">Select All</span>
<span class="t m" style="left:344px;top:217.75px;font-size:7.5px;color:#4e4e4e;transform:scaleX(0.9697);">Deselect All</span>
<span class="t m" style="left:344px;top:236.85px;font-size:7.5px;color:#4e4e4e;transform:scaleX(1.0359);">Highlight Text</span>
<span class="t m" style="left:344px;top:251.25px;font-size:7.5px;color:#4e4e4e;transform:scaleX(1.0039);">Underline Text</span>
<span class="t m" style="left:344px;top:265.85px;font-size:7.5px;color:#4e4e4e;transform:scaleX(0.9703);">Cross Out Text</span>
<span class="t m" style="left:344px;top:279.85px;font-size:7.5px;color:#4e4e4e;transform:scaleX(0.9483);">Replace Text</span>
<span class="t m" style="left:344px;top:294.25px;font-size:7.5px;color:#4e4e4e;transform:scaleX(0.9940);">Add Note To Text</span>
<span class="t m" style="left:344px;top:313.35px;font-size:7.5px;color:#4e4e4e;transform:scaleX(0.9857);">Add Bookmark</span>
<span class="t m" style="left:344px;top:327.55px;font-size:7.5px;color:#4e4e4e;transform:scaleX(0.9646);">Create Link</span>
<span class="t m" style="left:344px;top:347.35px;font-size:7.5px;color:#4e4e4e;transform:scaleX(0.9967);">Search Google for...</span>
<span class="t m" style="left:410px;top:169.75px;font-size:7.5px;color:#4e4e4e;transform:scaleX(1.0247);">Ctrl+C</span>
<span class="t m" style="left:410px;top:203.55px;font-size:7.5px;color:#4e4e4e;transform:scaleX(1.0453);">Ctrl+A</span>
<span class="t u" style="left:329.4px;top:236.46px;font-size:8.2px;color:#4a3a00;transform:scaleX(1.0470);font-family:'Liberation Serif',serif;font-weight:bold;">A</span>
<span class="t u" style="left:328.6px;top:249.58px;font-size:9px;color:#333;transform:scaleX(1.0462);font-family:'Liberation Serif',serif;">A</span>
<span class="t u" style="left:328.8px;top:264.58px;font-size:9px;color:#333;transform:scaleX(1.0462);font-family:'Liberation Serif',serif;">A</span>
<span class="t u" style="left:328px;top:280.47px;font-size:7px;color:#999;transform:scaleX(0.9877);font-family:'Liberation Serif',serif;">A</span>
<span class="t u" style="left:331.4px;top:279.38px;font-size:9px;color:#333;transform:scaleX(0.9231);font-family:'Liberation Serif',serif;">A</span>
<div style="left:327.5px;top:268.1px;width:9.4px;height:1.2px;background:#ea2227;"></div>
<div style="left:327.2px;top:258px;width:8.6px;height:1.2px;background:#7ac143;"></div>
<div style="left:0px;top:0px;width:1.3px;height:536px;background:#4f4f4f;"></div>
<div style="left:798px;top:0px;width:2px;height:536px;background:#555;"></div>
<div style="left:0px;top:533.6px;width:800px;height:2.4px;background:#555;"></div>
</div></body></html>
